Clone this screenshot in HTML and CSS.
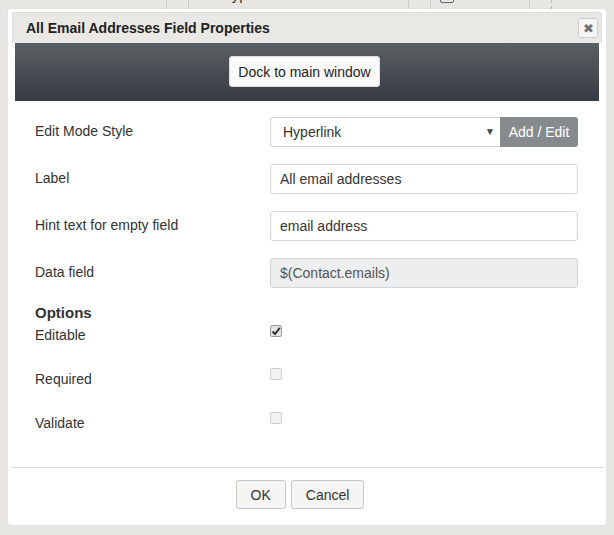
FILE: index.html
```html
<!DOCTYPE html>
<html>
<head>
<meta charset="utf-8">
<link rel="stylesheet" href="styles.css">
</head>
<body>
<div class="bgrow">
  <div class="cell c1"></div>
  <div class="cell c2"></div>
  <div class="cell c3"><span class="ico">○</span><span class="bgtext">Hyperlink</span></div>
  <div class="cell c4"></div>
  <div class="cell c5"><span class="bgbox"></span><span class="bgtext">Datum</span></div>
  <div class="cell c6"></div>
</div>

<div class="dialog">
  <div class="titlebar">
    <span class="title">All Email Addresses Field Properties</span>
    <span class="close">&#10006;</span>
  </div>
  <div class="band">
    <button class="dock">Dock to main window</button>
  </div>
  <div class="content">
    <div class="form">
      <div class="lbl">Edit Mode Style</div>
      <div class="ctl">
        <div class="select"><span>Hyperlink</span><span class="arrow">&#9660;</span></div>
        <div class="addedit">Add / Edit</div>
      </div>
      <div class="lbl">Label</div>
      <div class="ctl"><div class="input">All email addresses</div></div>
      <div class="lbl">Hint text for empty field</div>
      <div class="ctl"><div class="input">email address</div></div>
      <div class="lbl">Data field</div>
      <div class="ctl"><div class="input disabled">$(Contact.emails)</div></div>
    </div>
    <div class="options-h">Options</div>
    <div class="opts">
      <div class="olbl">Editable</div>
      <div class="ochk"><span class="cb checked"><svg width="10" height="10" viewBox="0 0 10 10"><path d="M1.5 5.5 L4 8 L8.8 1.8" fill="none" stroke="#333" stroke-width="2"/></svg></span></div>
      <div class="olbl">Required</div>
      <div class="ochk"><span class="cb"></span></div>
      <div class="olbl">Validate</div>
      <div class="ochk"><span class="cb"></span></div>
    </div>
  </div>
  <div class="footer">
    <button class="btn">OK</button>
    <button class="btn">Cancel</button>
  </div>
</div>
</body>
</html>
```

FILE: styles.css
```css
html, body {
  margin: 0;
  padding: 0;
}
body {
  background: #e7e6e2;
  font-family: "Liberation Sans", Arial, sans-serif;
  font-size: 14px;
  color: #333;
  width: 614px;
  height: 535px;
  overflow: hidden;
  position: relative;
}
.bgrow {
  display: flex;
  height: 9px;
  overflow: hidden;
}
.cell {
  height: 9px;
  border-right: 1px solid #cfcdc8;
  position: relative;
}
.c1 { width: 166px; }
.c2 { width: 21px; }
.c3 { width: 219px; }
.c4 { width: 21px; }
.c5 { width: 98px; }
.c6 { width: 21px; border-right: 1px dashed #bdbbb6; }
.ico { position: absolute; left: 8px; top: -12px; font-size: 12px; color: #555; }
.bgtext { position: absolute; left: 32px; top: -14px; font-size: 15px; line-height: 17px; color: #333; white-space: nowrap; }
.bgbox { position: absolute; left: 9px; top: -9px; width: 12px; height: 10px; border: 1px solid #666; border-radius: 2px; }

.dialog {
  position: absolute;
  left: 8px;
  top: 9px;
  width: 598px;
  height: 516px;
  background: #fff;
  border-radius: 3px;
  box-shadow: 0 0 1px rgba(0,0,0,0.15);
  display: flex;
  flex-direction: column;
}
.titlebar {
  margin: 3px 4px 0 4px;
  height: 30px;
  background: #e9e8e4;
  border: 1px solid #dedcd7;
  border-bottom: none;
  border-radius: 3px 3px 0 0;
  display: flex;
  align-items: center;
  justify-content: space-between;
  padding: 0 3px 0 13px;
}
.title {
  font-weight: bold;
  font-size: 14px;
  color: #222;
}
.close {
  width: 18px;
  height: 18px;
  border: 1px solid #cfcdc8;
  border-radius: 3px;
  background: #f6f5f3;
  color: #6f6f6f;
  font-size: 13px;
  display: flex;
  align-items: center;
  justify-content: center;
}
.band {
  margin: 0 7px;
  height: 58px;
  background: linear-gradient(#5b6064, #363b43);
  display: flex;
  justify-content: center;
  align-items: flex-start;
  padding-right: 5px;
}
.dock {
  margin-top: 13px;
  width: 151px;
  height: 31px;
  background: #fafafa;
  border: 1px solid #ddd;
  border-radius: 3px;
  font-family: "Liberation Sans", Arial, sans-serif;
  font-size: 14px;
  color: #222;
  padding: 0;
}
.content {
  flex: 1;
  padding: 16px 28px 0 27px;
}
.form {
  display: grid;
  grid-template-columns: 235px 308px;
  row-gap: 17px;
}
.lbl {
  height: 30px;
  display: flex;
  align-items: center;
  padding-bottom: 2px;
  box-sizing: border-box;
}
.ctl {
  display: flex;
  height: 30px;
}
.select {
  flex: 1;
  border: 1px solid #d4d4d4;
  border-right: none;
  border-radius: 3px 0 0 3px;
  display: flex;
  align-items: center;
  justify-content: space-between;
  padding: 0 5px 0 12px;
}
.arrow {
  font-size: 10px;
  color: #444;
  padding-bottom: 1px;
}
.addedit {
  width: 78px;
  background: #868c8e;
  color: #fff;
  border-radius: 0 3px 3px 0;
  display: flex;
  align-items: center;
  justify-content: center;
}
.input {
  flex: 1;
  border: 1px solid #d4d4d4;
  border-radius: 3px;
  display: flex;
  align-items: center;
  padding: 0 9px;
  color: #333;
}
.input.disabled {
  background: #eceeef;
  color: #555;
}
.options-h {
  margin-top: 16px;
  font-weight: bold;
  font-size: 15px;
  line-height: 18px;
  color: #333;
}
.opts {
  display: grid;
  grid-template-columns: 235px 308px;
  grid-auto-rows: 44px;
}
.olbl {
  padding-top: 5px;
}
.ochk {
  padding-top: 1px;
}
.cb {
  display: inline-flex;
  align-items: center;
  justify-content: center;
  width: 10px;
  height: 10px;
  border: 1px solid #cfcfcf;
  border-radius: 2px;
  background: #f2f2f2;
}
.cb.checked {
  background: #e4e4e4;
  border-color: #9a9a9a;
}
.footer {
  margin: 0 3px;
  border-top: 1px solid #dcdcdc;
  height: 58px;
  flex: none;
  display: flex;
  justify-content: center;
  align-items: flex-start;
  gap: 5px;
  padding: 12px 14px 0 0;
  box-sizing: border-box;
}
.btn {
  height: 29px;
  background: #f6f5f3;
  border: 1px solid #c9c7c1;
  border-radius: 3px;
  font-family: "Liberation Sans", Arial, sans-serif;
  font-size: 14px;
  color: #333;
  padding: 0 14px;
}
```
